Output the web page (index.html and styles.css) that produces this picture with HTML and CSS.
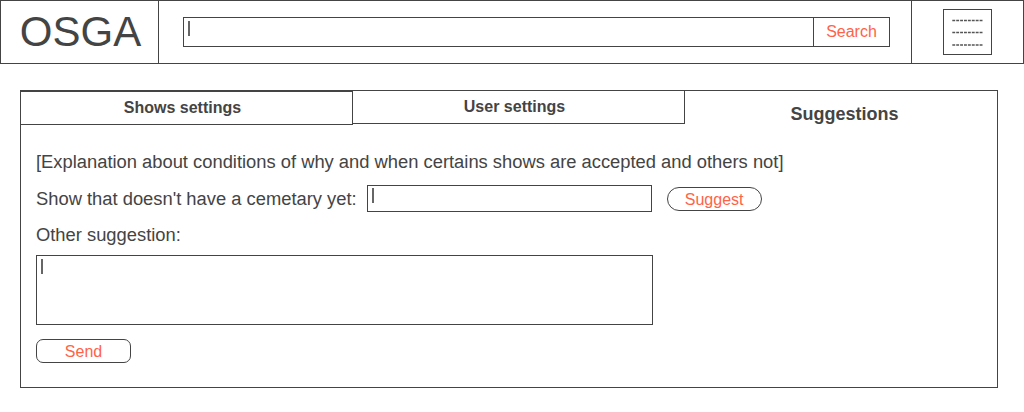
FILE: index.html
```html
<!DOCTYPE html>
<html>
<head>
<meta charset="utf-8">
<title>OSGA</title>
<link rel="stylesheet" href="styles.css">
</head>
<body>
<header class="topbar">
  <div class="logo-cell"><span class="logo">OSGA</span></div>
  <div class="search-cell">
    <div class="search-input"><span class="caret"></span></div>
    <div class="search-btn">Search</div>
  </div>
  <div class="menu-cell">
    <div class="menu-box">
      <svg width="47" height="44" viewBox="0 0 47 44">
        <g stroke="#555" stroke-width="1.6" stroke-dasharray="2.9 1">
          <line x1="8.3" y1="10.5" x2="39.3" y2="10.5"/>
          <line x1="8.3" y1="22.5" x2="39.3" y2="22.5"/>
          <line x1="8.3" y1="35" x2="39.3" y2="35"/>
        </g>
      </svg>
    </div>
  </div>
</header>

<section class="panel">
  <div class="tabs">
    <div class="tab tab-first">Shows settings</div>
    <div class="tab tab-second">User settings</div>
    <div class="tab tab-active">Suggestions</div>
  </div>
  <div class="content">
    <p class="explain">[Explanation about conditions of why and when certains shows are accepted and others not]</p>
    <div class="show-row">
      <span class="label">Show that doesn't have a cemetary yet:</span>
      <div class="field"><span class="caret"></span></div>
      <div class="btn btn-pill">Suggest</div>
    </div>
    <p class="label other">Other suggestion:</p>
    <div class="textarea"><span class="caret"></span></div>
    <div class="btn btn-send">Send</div>
  </div>
</section>
</body>
</html>
```

FILE: styles.css
```css
* { box-sizing: border-box; }

body {
  margin: 0;
  width: 1024px;
  font-family: "Liberation Sans", Arial, sans-serif;
  color: #444;
  background: #fff;
}

.topbar {
  display: flex;
  height: 64px;
  border: 1px solid #444;
}

.logo-cell {
  width: 158px;
  border-right: 1px solid #444;
  display: flex;
  align-items: center;
  justify-content: center;
}

.logo {
  font-size: 42px;
  line-height: 46px;
  color: #444;
  padding-left: 2px;
}

.search-cell {
  width: 753px;
  border-right: 1px solid #444;
  display: flex;
  align-items: center;
  padding-left: 24px;
}

.search-input {
  width: 630px;
  height: 30px;
  border: 1px solid #444;
  border-right: none;
  padding: 3px 0 0 4px;
}

.caret {
  display: block;
  width: 2px;
  height: 15px;
  background: #666;
}

.search-btn {
  width: 77px;
  height: 30px;
  border: 1px solid #444;
  color: #ff6347;
  font-size: 16px;
  display: flex;
  align-items: center;
  justify-content: center;
}

.menu-cell {
  flex: 1;
  display: flex;
  align-items: center;
  justify-content: center;
}

.menu-box {
  width: 49px;
  height: 46px;
  border: 1px solid #444;
}

.menu-box svg { display: block; }

.panel {
  margin: 26px 0 0 20px;
  width: 978px;
  border: 1px solid #444;
}

.tabs {
  display: flex;
  align-items: flex-start;
  margin-left: -1px;
}

.tab {
  width: 333px;
  height: 34px;
  border: 1px solid #444;
  font-weight: bold;
  font-size: 16px;
  display: flex;
  align-items: center;
  justify-content: center;
  padding-right: 8px;
  background: #fff;
}

.tab-second {
  margin-left: -1px;
  margin-top: -1px;
}

.tab-active {
  border: none;
  flex: 1;
  font-size: 18px;
  line-height: 20px;
  padding: 13px 0 0 7px;
  height: 34px;
  align-items: flex-start;
}

.content {
  padding: 27px 15px 24px 15px;
}

.explain {
  margin: 0;
  font-size: 18.35px;
  line-height: 20px;
}

.show-row {
  display: flex;
  align-items: center;
  margin-top: 13px;
  height: 27px;
}

.label {
  font-size: 18.35px;
  line-height: 20px;
}

.field {
  width: 285px;
  height: 27px;
  border: 1px solid #444;
  margin-left: 10px;
  padding: 2px 0 0 4px;
}

.btn {
  color: #ff6347;
  font-size: 16px;
  border: 1px solid #444;
  display: flex;
  align-items: center;
  justify-content: center;
  padding-top: 2px;
  background: #fff;
}

.btn-pill {
  width: 95px;
  height: 24px;
  border-radius: 12px;
  margin-left: 15px;
}

.other {
  margin: 13px 0 0 0;
}

.textarea {
  width: 617px;
  height: 70px;
  border: 1px solid #444;
  margin-top: 10px;
  padding: 3px 0 0 4px;
}

.btn-send {
  width: 95px;
  height: 24px;
  border-radius: 7px;
  margin-top: 14px;
}
```
